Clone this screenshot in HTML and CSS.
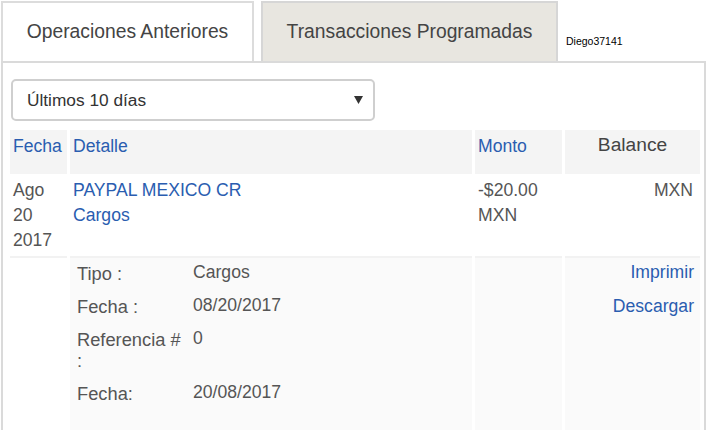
FILE: index.html
```html
<!DOCTYPE html>
<html lang="es">
<head>
<meta charset="utf-8">
<title>Operaciones</title>
<link rel="stylesheet" href="styles.css">
</head>
<body>
<div class="page">
  <div class="tabs">
    <div class="tab tab-active">Operaciones Anteriores</div>
    <div class="tab tab-other">Transacciones Programadas</div>
    <div class="user">Diego37141</div>
  </div>
  <div class="panel">
    <div class="select">
      <span>Últimos 10 días</span>
      <svg class="caret" width="9" height="8" viewBox="0 0 9 8"><path d="M0 0H9L4.5 8Z" fill="#333"/></svg>
    </div>
    <table class="tx">
      <colgroup>
        <col class="c-fecha"><col class="c-detalle"><col class="c-monto"><col class="c-balance">
      </colgroup>
      <tr class="head">
        <th>Fecha</th>
        <th>Detalle</th>
        <th>Monto</th>
        <th class="bal">Balance</th>
      </tr>
      <tr class="row">
        <td>Ago<br>20<br>2017</td>
        <td><a class="link">PAYPAL MEXICO CR</a><br><a class="link">Cargos</a></td>
        <td>-$20.00<br>MXN</td>
        <td class="right">MXN</td>
      </tr>
      <tr class="detail">
        <td class="blank"></td>
        <td>
          <div class="info">
            <div class="lbl">Tipo :</div><div class="val">Cargos</div>
            <div class="lbl">Fecha :</div><div class="val">08/20/2017</div>
            <div class="lbl">Referencia # :</div><div class="val">0</div>
            <div class="lbl">Fecha:</div><div class="val">20/08/2017</div>
          </div>
        </td>
        <td></td>
        <td class="right actions">
          <a class="link action">Imprimir</a>
          <a class="link action">Descargar</a>
        </td>
      </tr>
    </table>
  </div>
</div>
</body>
</html>
```

FILE: styles.css
```css
html, body {
  margin: 0;
  padding: 0;
  background: #fff;
}

body {
  font-family: "Liberation Sans", Arial, sans-serif;
  font-size: 17.6px;
  color: #555;
}

.page {
  padding: 1px 0 0 1px;
  width: 705px;
  height: 429px;
  overflow: hidden;
}

.tabs {
  display: flex;
  height: 60px;
}

.tab {
  box-sizing: border-box;
  height: 60px;
  border: 2px solid #dcdcdc;
  border-bottom: none;
  display: flex;
  align-items: center;
  justify-content: center;
  font-size: 19.3px;
  color: #444;
}

.tab-active {
  width: 253px;
  background: #fff;
}

.tab-other {
  width: 297px;
  margin-left: 7px;
  background: #e8e6e0;
  border-color: #d6d6d6;
}

.user {
  align-self: flex-end;
  margin-left: 8px;
  padding-bottom: 14px;
  font-size: 10.5px;
  color: #000;
}

.panel {
  box-sizing: border-box;
  width: 705px;
  height: 380px;
  border: 2px solid #dadada;
}

.select {
  box-sizing: border-box;
  width: 364px;
  height: 42px;
  margin: 16px 0 0 8px;
  border: 2px solid #cfcfcf;
  border-radius: 5px;
  display: flex;
  align-items: center;
  justify-content: space-between;
  padding: 0 10px 0 14px;
  font-size: 17.3px;
  color: #333;
}

.caret {
  display: block;
}

.tx {
  table-layout: fixed;
  width: 696px;
  border-collapse: separate;
  border-spacing: 3px;
  margin: 6px 0 0 4px;
}

.c-fecha { width: 57px; }
.c-detalle { width: 402px; }
.c-monto { width: 87px; }
.c-balance { width: 135px; }

.tx th,
.tx td {
  box-sizing: border-box;
  padding: 0 3px;
  vertical-align: top;
  text-align: left;
  line-height: 25px;
}

.head th {
  height: 44px;
  padding-top: 4px;
  background: #f4f4f4;
  font-weight: normal;
  color: #2a5db0;
}

.head th.bal {
  text-align: center;
  font-size: 19.2px;
  color: #444;
  padding-top: 2px;
}

.row td {
  height: 76px;
  padding-top: 1px;
  background: #fff;
}

.tx .right {
  text-align: right;
  padding-right: 7px;
}

.link {
  color: #2a5db0;
  text-decoration: none;
}

.detail td {
  height: 260px;
  background: #fafafa;
  border-top: 2px solid #f2f2f2;
  padding-top: 4px;
}

.detail td.blank {
  background: #fff;
}

.info {
  display: grid;
  grid-template-columns: 106px 1fr;
  column-gap: 10px;
  row-gap: 12px;
  padding: 1px 0 0 4px;
  line-height: 21px;
}

.lbl {
  font-size: 18.3px;
}

.val {
  position: relative;
  top: -1px;
}

.tx .actions {
  padding-right: 6px;
}

.action {
  display: block;
  line-height: 21px;
  margin-bottom: 13px;
}
```
